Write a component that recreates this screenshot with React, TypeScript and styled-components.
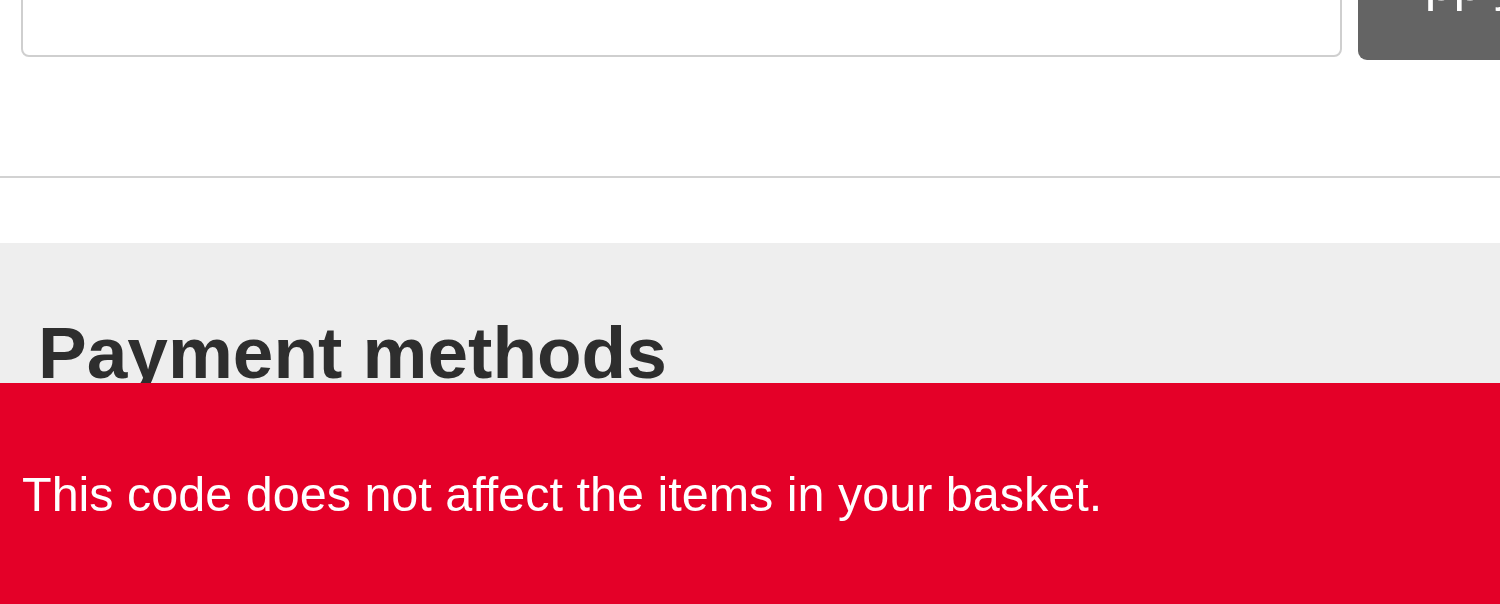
import React from "react";
import styled, { createGlobalStyle } from "styled-components";

const GlobalStyle = createGlobalStyle`
  html, body {
    margin: 0;
    padding: 0;
    background: #ffffff;
    overflow: hidden;
    font-family: "Liberation Sans", Arial, sans-serif;
  }
`;

const Page = styled.div`
  width: 1500px;
  height: 604px;
  display: flex;
  flex-direction: column;
`;

const CouponRow = styled.form`
  display: flex;
  gap: 16px;
  height: 120px;
  margin-top: -60px;
  padding-left: 21px;
`;

const CouponInput = styled.input`
  flex: 1;
  height: 117px;
  box-sizing: border-box;
  border: 2px solid #cfcfcf;
  border-radius: 8px;
  background: #fff;
  outline: none;
`;

const ApplyButton = styled.button`
  width: 220px;
  margin-right: -78px;
  height: 120px;
  box-sizing: border-box;
  display: flex;
  align-items: flex-end;
  padding: 0 32px 52px;
  border: none;
  border-radius: 9px;
  background: #646464;
  color: #fff;
  font-family: "Liberation Sans", Arial, sans-serif;
  font-size: 52px;
  line-height: 52px;
`;

const Divider = styled.hr`
  margin: 116px 0 0;
  border: none;
  height: 2px;
  background: #d2d2d2;
`;

const PaymentSection = styled.section`
  margin-top: 65px;
  flex: 1;
  background: #eeeeee;
  padding: 68px 38px 0;
`;

const Heading = styled.h2`
  margin: 0;
  font-size: 73px;
  font-weight: 700;
  color: #2e2e2e;
  line-height: 83px;
`;

const Toast = styled.div`
  position: fixed;
  left: 0;
  right: 0;
  bottom: 0;
  height: 221px;
  display: flex;
  align-items: center;
  padding-left: 22px;
  background: #e40028;
  color: #ffffff;
  font-size: 48.5px;
`;

export default function App() {
  return (
    <>
      <GlobalStyle />
      <Page>
        <CouponRow onSubmit={(e) => e.preventDefault()}>
          <CouponInput type="text" aria-label="Discount code" />
          <ApplyButton type="submit">Apply</ApplyButton>
        </CouponRow>
        <Divider />
        <PaymentSection>
          <Heading>Payment methods</Heading>
        </PaymentSection>
      </Page>
      <Toast role="alert">This code does not affect the items in your basket.</Toast>
    </>
  );
}
